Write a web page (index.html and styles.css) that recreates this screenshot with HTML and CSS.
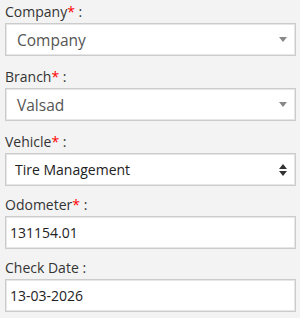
FILE: index.html
```html
<!DOCTYPE html>
<html>
<head>
<meta charset="utf-8">
<link rel="stylesheet" href="styles.css">
</head>
<body>
<form class="form">
  <div class="group wide">
    <div class="label">Company<span class="req">*</span> :</div>
    <div class="box select big">
      <span class="val muted">Company</span>
      <svg class="caret" width="8" height="5" viewBox="0 0 8 5"><path d="M0 0H8L4 5Z" fill="#888"/></svg>
    </div>
  </div>
  <div class="group wide">
    <div class="label">Branch<span class="req">*</span> :</div>
    <div class="box select big">
      <span class="val muted">Valsad</span>
      <svg class="caret" width="8" height="5" viewBox="0 0 8 5"><path d="M0 0H8L4 5Z" fill="#888"/></svg>
    </div>
  </div>
  <div class="group">
    <div class="label">Vehicle<span class="req">*</span> :</div>
    <div class="box select native">
      <span class="val dark">Tire Management</span>
      <svg class="updown" width="8" height="12" viewBox="0 0 8 12"><path d="M4 0L8 5H0Z M0 7H8L4 12Z" fill="#333"/></svg>
    </div>
  </div>
  <div class="group">
    <div class="label">Odometer<span class="req">*</span> :</div>
    <div class="box input"><span class="val dark">131154.01</span></div>
  </div>
  <div class="group">
    <div class="label">Check Date :</div>
    <div class="box input"><span class="val dark">13-03-2026</span></div>
  </div>
</form>
</body>
</html>
```
FILE: styles.css
```css
html, body {
  margin: 0;
  padding: 0;
  background: #f3f3f3;
}
body {
  font-family: "Open Sans", "Noto Sans", sans-serif;
  color: #333;
}
.form {
  display: flex;
  flex-direction: column;
  padding: 2px 4px 0 5px;
}
.group {
  display: flex;
  flex-direction: column;
  margin-bottom: 9px;
}
.group.wide {
  margin-bottom: 11px;
}
.label {
  font-size: 14px;
  line-height: 19px;
  color: #333;
  margin-bottom: 2px;
}
.req {
  color: #f00;
}
.box {
  box-sizing: border-box;
  height: 33px;
  background: #fff;
  border: 1px solid #ccc;
  box-shadow: inset 0 0 0 1px #e6e6e6;
  display: flex;
  align-items: center;
  justify-content: space-between;
}
.big {
  padding: 0 8px 0 11px;
}
.big .val {
  font-size: 15.5px;
}
.muted {
  color: #555;
}
.dark {
  color: #222;
}
.native {
  padding: 0 8px 0 9px;
}
.native .val {
  font-size: 14px;
}
.input {
  padding: 0 8px 0 4px;
}
.input .val {
  font-size: 14px;
}
```
